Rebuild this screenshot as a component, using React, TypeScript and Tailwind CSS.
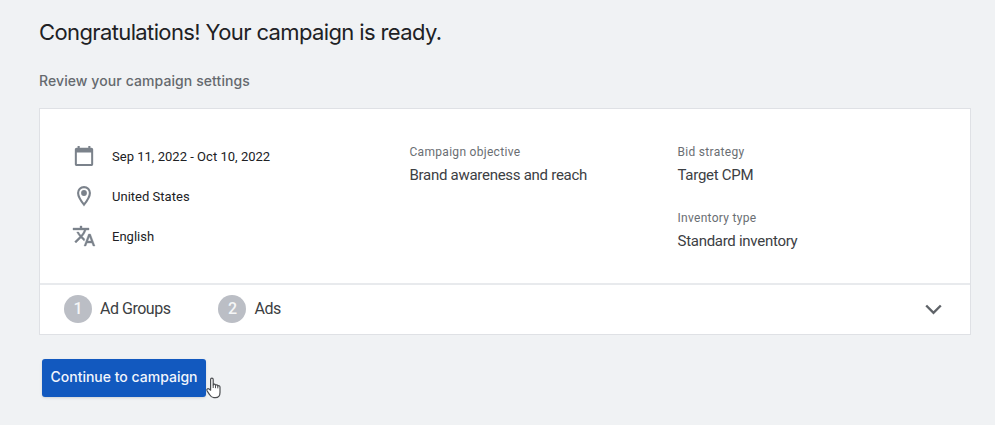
import type { ReactNode } from 'react';

const STEPS = ['Ad Groups', 'Ads'];

function CalendarIcon() {
  return (
    <svg width="22" height="22" viewBox="0 0 24 24" fill="currentColor">
      <path d="M20 3h-1V1h-2.3v2H7.3V1H5v2H4c-1.1 0-2 .9-2 2v16c0 1.1.9 2 2 2h16c1.1 0 2-.9 2-2V5c0-1.1-.9-2-2-2zm-.2 17.8H4.2V8.2h15.6v12.6z" />
    </svg>
  );
}

function PinIcon() {
  return (
    <svg width="24" height="24" viewBox="0 0 24 24" fill="none">
      <path
        d="M12 20.7C9.2 17.2 6.1 12.8 6.1 9C6.1 5.7 8.7 3.1 12 3.1S17.9 5.7 17.9 9C17.9 12.8 14.8 17.2 12 20.7Z"
        stroke="currentColor"
        strokeWidth="2.1"
      />
      <circle cx="12" cy="9" r="2.9" fill="currentColor" />
    </svg>
  );
}

function TranslateIcon() {
  return (
    <svg width="24" height="24" viewBox="0 0 24 24" fill="currentColor" stroke="currentColor" strokeWidth="0.35">
      <path d="m12.87 15.07-2.54-2.51.03-.03c1.74-1.94 2.98-4.17 3.71-6.53H17V4h-7V2H8v2H1v1.99h11.17C11.5 7.92 10.44 9.75 9 11.35 8.07 10.32 7.3 9.19 6.69 8h-2c.73 1.63 1.73 3.17 2.98 4.56l-5.09 5.02L4 19l5-5 3.11 3.11.76-2.04zM18.5 10h-2L12 22h2l1.12-3h4.75L21 22h2l-4.5-12zm-2.62 7 1.62-4.33L19.12 17h-3.24z" />
    </svg>
  );
}

function SummaryRow({ icon, children }: { icon: ReactNode; children: ReactNode }) {
  return (
    <div className="flex h-10 items-center">
      <span className="flex w-6 justify-center pb-0.5 text-[#7b828b]">{icon}</span>
      <span className="ml-4 whitespace-nowrap text-[13px] tracking-[0.02px] text-[#202124]">{children}</span>
    </div>
  );
}

function Setting({ label, value }: { label: string; value: string }) {
  return (
    <div className="h-[66px] whitespace-nowrap">
      <p className="text-xs leading-[18px] tracking-[0.3px] text-[#6a6e73]">{label}</p>
      <p className="mt-0.5 text-[15px] leading-6 tracking-[-0.28px] text-[#3c4043]">{value}</p>
    </div>
  );
}

function HandCursor() {
  return (
    <svg width="15" height="22" viewBox="0 0 15 22" className="absolute left-[164px] top-[18px]">
      <path
        d="M4.6 13.2V2.6C4.6 .6 7.2.6 7.2 2.6V8C7.5 6.7 9.5 7 9.5 8.4C9.9 7.4 11.7 7.7 11.8 9C12.5 8.2 14 8.8 14 10.2V15.4C14 18.6 12.3 20.6 9.3 20.6H7.8C5.8 20.6 4.7 19.5 3.7 17.8L1.1 13.8C.2 12.2 1.9 11 3.1 12.1Z"
        fill="#fff"
        stroke="#4b4d50"
        strokeWidth="1.2"
        strokeLinejoin="round"
      />
      <path d="M7.2 7.8V11M9.5 8.4V11.2M11.8 9V11.4" stroke="#4b4d50" strokeWidth="1" fill="none" />
    </svg>
  );
}

export default function App() {
  return (
    <div className="h-[425px] w-[995px] bg-[#f0f2f4] pl-[39px] pt-4 font-['Roboto',sans-serif]">
      <h1 className="h-8 whitespace-nowrap font-['Inter',sans-serif] text-[22px] leading-8 tracking-[-0.62px] text-[#202124]">
        Congratulations! Your campaign is ready.
      </h1>
      <h2 className="mt-[21px] h-6 whitespace-nowrap font-['Inter',sans-serif] text-sm font-medium leading-6 tracking-[0.09px] text-[#65696e]">
        Review your campaign settings
      </h2>

      <div className="mt-[15px] h-[227px] w-[932px] border border-[#dfe1e5] bg-white">
        <div className="flex h-[176px] border-b-2 border-[#e8eaed] pl-8">
          <div className="w-[337.5px] pt-7">
            <SummaryRow icon={<CalendarIcon />}>Sep 11, 2022 - Oct 10, 2022</SummaryRow>
            <SummaryRow icon={<PinIcon />}>United States</SummaryRow>
            <SummaryRow icon={<TranslateIcon />}>English</SummaryRow>
          </div>
          <div className="w-[268px] pt-[34px]">
            <Setting label="Campaign objective" value="Brand awareness and reach" />
          </div>
          <div className="pt-[34px]">
            <Setting label="Bid strategy" value="Target CPM" />
            <Setting label="Inventory type" value="Standard inventory" />
          </div>
        </div>

        <div className="flex h-[49px] items-center gap-12 pb-px pl-6 pr-7">
          {STEPS.map((step, i) => (
            <div key={step} className="flex items-center gap-2">
              <span className="flex size-7 items-center justify-center rounded-full bg-[#bbbec5] text-base font-medium text-[#f5f6f7]">
                {i + 1}
              </span>
              <span className="whitespace-nowrap text-base tracking-[-0.48px] text-[#3c4043]">{step}</span>
            </div>
          ))}
          <svg width="17" height="11" viewBox="0 0 17 11" className="ml-auto">
            <path d="M1.2 1.5L8.5 8.8L15.8 1.5" fill="none" stroke="#5f6368" strokeWidth="2.4" />
          </svg>
        </div>
      </div>

      <div className="relative ml-[3px] mt-6 w-[164px]">
        <button className="h-[38px] w-[164px] whitespace-nowrap rounded-[3px] bg-[#1259bf] pb-0.5 font-['Inter',sans-serif] text-sm font-medium text-[#f1f5fc] shadow-sm">
          Continue to campaign
        </button>
        <HandCursor />
      </div>
    </div>
  );
}
